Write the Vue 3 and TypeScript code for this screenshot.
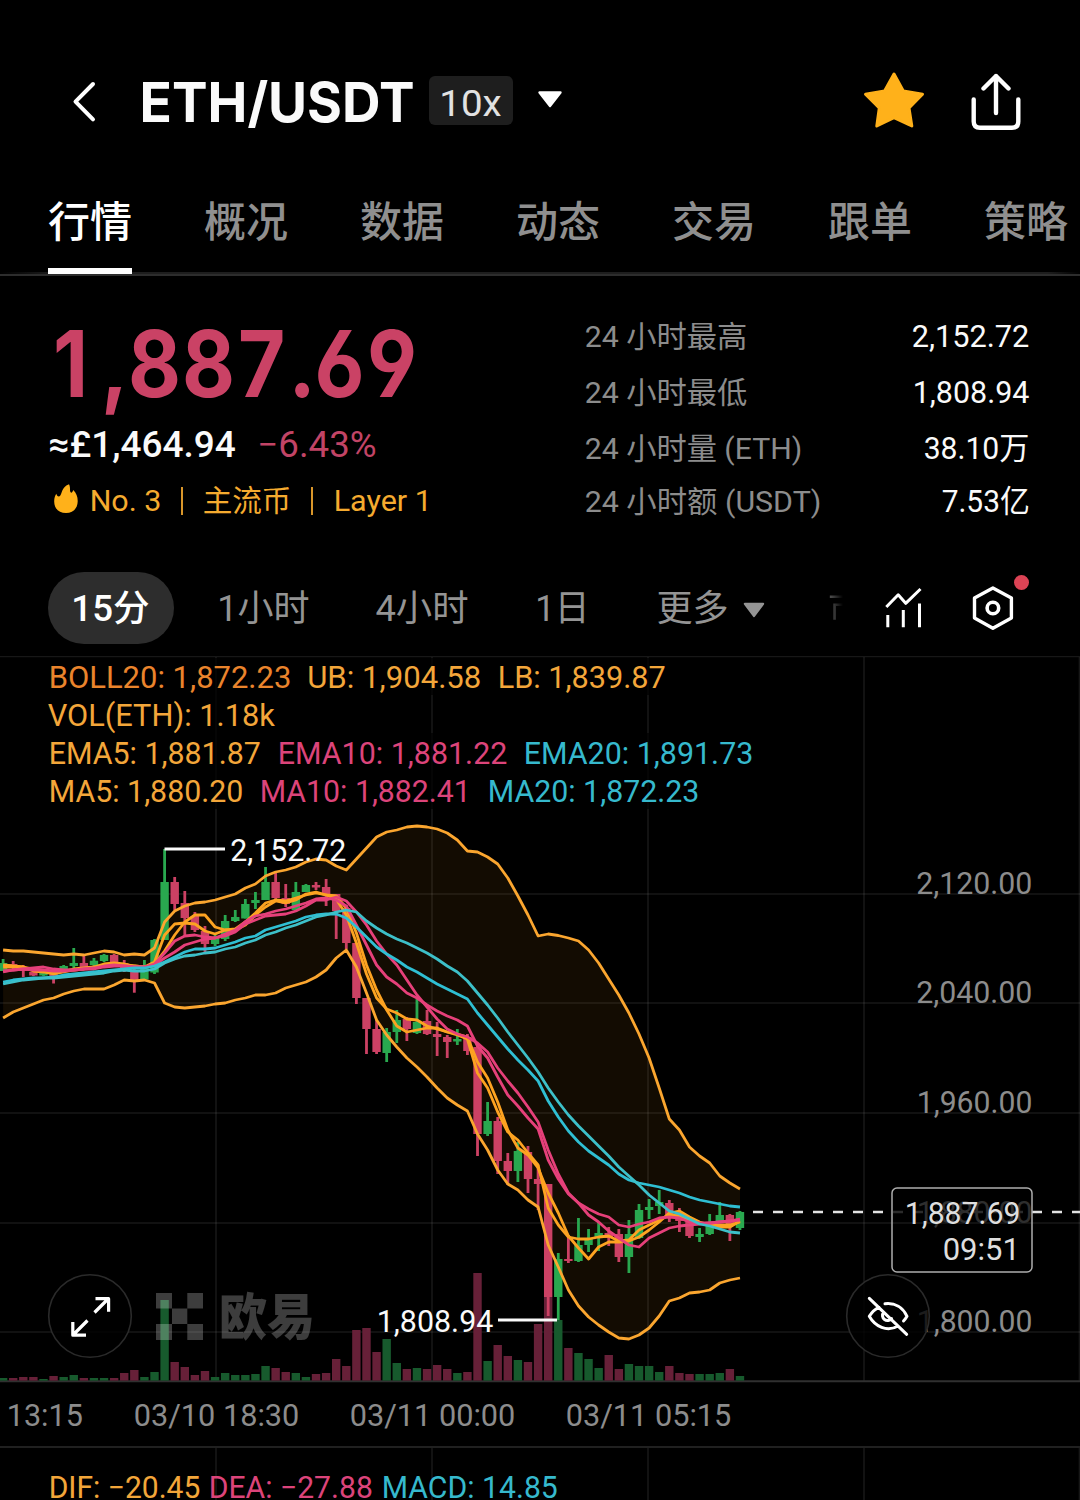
<script setup lang="ts">
import { h, type FunctionalComponent } from 'vue'

interface FitProps {
  text: string
  w: number
  size: number
  weight?: number
}

// Side bearings around the drawn ink; a "1" carries a wider one on its left
function bearings(text: string, size: number) {
  const base = size * 0.045
  return {
    left: base + (text.startsWith('1') ? size * 0.03 : 0),
    right: base + (text.endsWith('1') ? size * 0.05 : 0),
  }
}

// Single line of text condensed or stretched to a fixed width
const Fit: FunctionalComponent<FitProps> = (p) => {
  const b = bearings(p.text, p.size)
  return h('svg', { width: p.w, height: p.size, style: 'display:block;overflow:visible;flex:none' }, [
    h(
      'text',
      {
        x: -b.left,
        y: p.size * 0.86,
        textLength: p.w + b.left + b.right,
        lengthAdjust: 'spacingAndGlyphs',
        fill: 'currentColor',
        'font-size': p.size,
        'font-weight': p.weight ?? 400,
        style: 'white-space:pre',
      },
      p.text,
    ),
  ])
}
Fit.props = ['text', 'w', 'size', 'weight']

// Pen positions of the large price's glyphs, before the horizontal squeeze
const SQUEEZE = 0.89
const priceX = [-3, 45, 72, 126, 182, 232.5, 258.5, 311].map((x) => (x / SQUEEZE).toFixed(1)).join(' ')

const tabs = ['行情', '概况', '数据', '动态', '交易', '跟单', '策略']

const stats = [
  { label: '24 小时最高', lw: 160, value: '2,152.72', vw: 115 },
  { label: '24 小时最低', lw: 160, value: '1,808.94', vw: 113 },
  { label: '24 小时量 (ETH)', lw: 215, value: '38.10万', vw: 103 },
  { label: '24 小时额 (USDT)', lw: 234, value: '7.53亿', vw: 85.5 },
]

const STEP = 10.094
const cx = (i: number) => 3.1 + i * STEP

// [direction, high, body top, body bottom, low, volume top]
type Row = [string, number, number, number, number, number]
const rows: Row[] = [
  ['g', 959, 963, 971, 971, 1378], ['r', 961, 964, 968, 969, 1378], ['r', 965, 967, 971, 977, 1377],
  ['r', 972, 972, 975.5, 976, 1377], ['g', 973, 973, 975.5, 976, 1379], ['r', 973, 973, 977, 983.5, 1376],
  ['g', 965, 966, 970, 972, 1377], ['g', 948, 963, 966, 968, 1375], ['r', 955.7, 963, 967, 968, 1378],
  ['g', 958, 960.7, 965, 966, 1378], ['g', 954, 955, 961, 962, 1378], ['r', 954, 955, 962, 963, 1378],
  ['r', 960, 963, 968, 972, 1373], ['r', 969, 970, 980, 992.7, 1370], ['g', 960, 968, 979.5, 980, 1377],
  ['g', 939, 940, 972.5, 974, 1372], ['g', 849, 882, 940, 940, 1300], ['r', 877, 882, 904, 910, 1362],
  ['r', 891, 903, 918, 936, 1367], ['r', 912, 916, 930, 932, 1375], ['r', 926, 931, 944, 953, 1371],
  ['g', 935, 938, 944, 946, 1377], ['g', 915, 921, 939, 941, 1373], ['g', 910, 917, 921, 922, 1375],
  ['g', 899, 904, 918.5, 918.5, 1375], ['g', 892, 900, 903, 909, 1374], ['g', 867, 882, 900, 900, 1366],
  ['r', 873, 882, 898, 899, 1368], ['r', 884, 898, 904, 907, 1372], ['g', 882, 892, 910, 912, 1373],
  ['g', 884, 885, 892, 892, 1377], ['r', 882, 885, 887.5, 890, 1374], ['r', 879, 887, 894, 906, 1373],
  ['r', 894, 894, 911, 939, 1359], ['r', 905, 908, 943, 949, 1366], ['r', 943, 943, 998, 1004, 1330],
  ['r', 998, 998, 1029, 1054, 1328], ['r', 1020, 1029, 1052, 1054, 1352], ['g', 1028, 1032, 1053, 1062, 1339],
  ['g', 1010, 1020, 1032, 1043, 1363], ['r', 1017, 1019, 1029, 1041, 1369], ['g', 999, 1022, 1033, 1034, 1368],
  ['r', 1010, 1021, 1034, 1035, 1369], ['r', 1022, 1034, 1037, 1056, 1365], ['r', 1035, 1037, 1042, 1058, 1369],
  ['g', 1029, 1039, 1041.5, 1045, 1373], ['r', 1034, 1037, 1051, 1055, 1372], ['r', 1043, 1047, 1134, 1156, 1273],
  ['g', 1102, 1121, 1134, 1136, 1361], ['r', 1117, 1121, 1161, 1174, 1345], ['r', 1153, 1161, 1171, 1185, 1356],
  ['g', 1142, 1151, 1171, 1182, 1360], ['r', 1146, 1152, 1179, 1193, 1362], ['r', 1165, 1179, 1184, 1210, 1324],
  ['r', 1184, 1184, 1297, 1316, 1297], ['g', 1253, 1259, 1297, 1320, 1320], ['r', 1235, 1259, 1261, 1263, 1348],
  ['g', 1218, 1245, 1261, 1262, 1353], ['g', 1229, 1239, 1245, 1252, 1359], ['g', 1222, 1233, 1237, 1251, 1368],
  ['r', 1227, 1233, 1238, 1246, 1355], ['r', 1229, 1234, 1257, 1262, 1369], ['g', 1220, 1234, 1257, 1273, 1364],
  ['g', 1204, 1210, 1238, 1239, 1366], ['g', 1199, 1207, 1210, 1219, 1366], ['g', 1190, 1202, 1206, 1214, 1372],
  ['r', 1200, 1203, 1215, 1222, 1366], ['r', 1208, 1213, 1221, 1232, 1373], ['r', 1220, 1220, 1236, 1238, 1374],
  ['g', 1228, 1234, 1237, 1242, 1374], ['g', 1214, 1222, 1234, 1235, 1374], ['g', 1202, 1215, 1223, 1223, 1373],
  ['r', 1214, 1215, 1226, 1241, 1369], ['g', 1211, 1212, 1228, 1230, 1376],
]
const candles = rows.map(([d, high, top, bottom, low, vol], i) => ({
  x: cx(i), up: d === 'g', high, top, bottom, low, vol,
}))

const upper = [
  950, 951, 951, 952, 953, 954, 955, 954, 955, 953, 951, 952, 955, 954, 955, 948, 922, 911, 906, 903, 902, 900, 897,
  894, 888, 884, 876, 872, 870, 867, 862, 859, 860, 866, 870, 859, 848, 837, 832, 830, 827, 826, 827, 829, 833, 840,
  851, 852, 857, 864, 878, 896, 915, 936, 934, 935.5, 938, 941, 950, 963, 979, 995, 1013, 1034, 1058, 1088, 1119, 1130,
  1147, 1156, 1163, 1176, 1183, 1189,
]
const lower = [
  1018, 1012, 1008, 1004, 1000, 998, 994, 991, 989, 989, 989, 985, 980, 981, 980, 983, 1003, 1007, 1008, 1007, 1006,
  1004, 1003, 1000, 998, 995, 995, 993, 988, 985, 982, 977, 970, 958, 950, 967, 993, 1020, 1035, 1047, 1058, 1067,
  1077, 1088, 1098, 1105, 1111, 1134, 1150, 1170, 1184, 1190, 1200, 1207, 1245, 1267, 1290, 1306, 1317, 1325, 1332,
  1338, 1339, 1335, 1328, 1316, 1301, 1298, 1293, 1292, 1290, 1283, 1280, 1278,
]
const ema20 = [
  982, 980, 979, 978, 978, 977, 975, 974, 973, 972, 971, 970, 969, 968, 968, 966, 962, 957, 952, 949, 949, 948, 945,
  942, 938, 936, 930, 927, 924, 921, 917, 915, 914, 914, 918, 927, 937, 947, 954, 960, 967, 972, 978, 984, 989, 994,
  999, 1013, 1025, 1037, 1049, 1060, 1070, 1081, 1101, 1117, 1131, 1142, 1151, 1158, 1165, 1174, 1180, 1183, 1185,
  1187, 1190, 1193, 1197, 1200, 1202, 1204, 1206, 1207,
]
const ma20 = [
  984, 982, 980, 979, 978, 978, 977, 976, 975, 974, 973, 971, 970, 971, 971, 969, 963, 959, 956, 955, 953, 952, 949,
  947, 943, 940, 935, 932, 928, 925, 921, 917, 915, 912, 910, 912, 921, 928, 934, 939, 943, 948, 953, 959, 966, 972,
  981, 993, 1005, 1018, 1032, 1045, 1058, 1072, 1088, 1102, 1115, 1126, 1136, 1146, 1156, 1167, 1176, 1185, 1195,
  1203, 1211, 1214, 1219, 1224, 1226, 1229, 1232, 1233,
]
const ema10 = [
  972, 970, 969, 970, 970, 971, 971, 970, 969, 968, 966, 965, 966, 967, 967, 964, 953, 941, 936, 935, 937, 938, 934,
  930, 921.5, 916, 914, 911, 909, 906, 903, 899, 898, 900, 906, 925, 945, 965, 977, 984, 993, 998, 1005, 1011, 1016,
  1020, 1026, 1046, 1058, 1077, 1095, 1106, 1118, 1129, 1160, 1179, 1194, 1203, 1209, 1214, 1217, 1225, 1227, 1224,
  1222, 1218, 1217, 1218, 1222, 1223, 1223, 1222, 1221, 1220,
]
const ma10 = [
  971, 970, 969, 968, 967, 969, 970, 970, 969, 969, 967, 966, 966, 967, 967, 965, 958, 952, 945, 942, 939, 938, 936,
  932, 924, 920, 916, 915, 914, 911, 906, 900, 900, 897, 901, 912, 925, 941, 954, 965, 980, 995, 1007, 1019, 1029,
  1034, 1037, 1043, 1052, 1068, 1081, 1093, 1107, 1122, 1150, 1174, 1193, 1203, 1215, 1222, 1231, 1238, 1245, 1247,
  1238, 1233, 1228, 1226, 1225, 1224, 1223, 1222, 1221, 1219,
]
const ema5 = [
  967, 967, 967, 969, 971, 972, 971, 969, 968, 967, 964, 963, 964, 966, 967, 962, 935, 924, 923, 924, 931, 934, 930,
  929, 922, 913, 903, 900, 901, 898, 895, 893, 895, 899, 915, 943, 974, 998, 1009, 1013, 1019, 1020, 1026, 1029, 1032,
  1035, 1039, 1073, 1088, 1112, 1132, 1140, 1153, 1165, 1208, 1225, 1237, 1239, 1239, 1237, 1236, 1241, 1240, 1230,
  1225, 1220, 1215, 1216, 1220, 1223, 1225, 1225, 1225, 1222,
]
const ma5 = [
  965, 966, 967, 971, 972, 974, 972, 970, 969, 967, 965, 964, 965, 966, 967, 964, 951, 935, 922, 915, 915, 927, 930,
  930, 925, 915, 907, 901, 903, 900, 894, 892, 895, 896, 908, 933, 965, 990, 1010, 1026, 1032, 1030, 1028, 1028, 1032,
  1034, 1037, 1062, 1078, 1102, 1130, 1148, 1155, 1168, 1193, 1213, 1236, 1248, 1259, 1247, 1242, 1242, 1241, 1237,
  1230, 1222, 1213, 1211, 1217, 1222, 1225, 1227, 1227, 1221,
]

const pts = (ys: number[]) => ys.map((y, i) => `${cx(i).toFixed(1)},${y}`)
const line = (ys: number[]) => pts(ys).join(' ')
const band = [...pts(upper), ...pts(lower).reverse()].join(' ')

const curves = [
  { ys: upper, color: '#fba62f' },
  { ys: lower, color: '#fba62f' },
  { ys: ma5, color: '#fda321' },
  { ys: ema5, color: '#fda321' },
  { ys: ma10, color: '#e6407a' },
  { ys: ema10, color: '#e6407a' },
  { ys: ema20, color: '#2fbfd3' },
  { ys: ma20, color: '#3dc0c9' },
].map((c) => ({ color: c.color, points: line(c.ys) }))

// [text, left ink edge, right ink edge, baseline, colour]
type Label = [string, number, number, number, string]
const grey = '#8c8c8c'
const gold = '#f3a63a'
const pink = '#dc447a'
const cyan = '#36b9cd'
const labelRows: Label[] = [
  ['BOLL20: 1,872.23', 50, 290, 687.7, '#ea842c'],
  ['UB: 1,904.58', 308.5, 480, 687.7, gold],
  ['LB: 1,839.87', 499, 664.5, 687.7, gold],
  ['VOL(ETH): 1.18k', 49, 273.5, 725.7, gold],
  ['EMA5: 1,881.87', 50, 259.5, 763.7, gold],
  ['EMA10: 1,881.22', 279, 506, 763.7, pink],
  ['EMA20: 1,891.73', 525, 752, 763.7, cyan],
  ['MA5: 1,880.20', 50, 242, 801.7, gold],
  ['MA10: 1,882.41', 261, 468, 801.7, pink],
  ['MA20: 1,872.23', 489, 698, 801.7, cyan],
  ['2,120.00', 917.5, 1031, 893.7, grey],
  ['2,040.00', 917.5, 1031, 1003, grey],
  ['1,960.00', 919, 1031, 1112.7, grey],
  ['1,800.00', 919, 1031, 1331.7, grey],
  ['13:15', 9, 81.5, 1425.5, grey],
  ['03/10 18:30', 135, 298, 1425.5, grey],
  ['03/11 00:00', 351, 514, 1425.5, grey],
  ['03/11 05:15', 567, 730, 1425.5, grey],
  ['DIF: −20.45', 50, 199, 1497.7, gold],
  ['DEA: −27.88', 210, 371.5, 1497.7, pink],
  ['MACD: 14.85', 383, 556.5, 1497.7, cyan],
  ['2,152.72', 231.5, 345, 860.5, '#fafafa'],
  ['1,808.94', 379, 492, 1331.7, '#fafafa'],
]
const fit = ([text, x1, x2, y, color]: Label) => {
  const b = bearings(text, 30)
  return { text, x: x1 - b.left, y, len: x2 - x1 + b.left + b.right, color }
}
const labels = labelRows.map(fit)
const ghost = fit(['1,880.00', 919, 1031, 1222.5, '#2e2e2e'])
const quote = [
  fit(['1,887.69', 907, 1019, 1223.7, '#dedede']),
  fit(['09:51', 944, 1017, 1260, '#dedede']),
]

const gridX = [216, 432, 648, 864, 1079.5]
const gridY = [894, 1003, 1113, 1223, 1332]
</script>

<template>
  <main class="screen">
    <header class="header">
      <svg class="back" width="24" height="42" viewBox="72 81 24 42">
        <path d="M93 84 L75.5 101.7 L93 119.4" fill="none" stroke="#fff" stroke-width="4" stroke-linecap="round" stroke-linejoin="round" />
      </svg>
      <Fit class="title" text="ETH/USDT" :w="270" :size="55" :weight="700" />
      <div class="badge"><Fit text="10x" :w="58" :size="37" /></div>
      <svg class="caret" width="26" height="18" viewBox="537 90 26 18">
        <path d="M539.5 92.5 H560.5 L550 106 Z" fill="#fff" stroke="#fff" stroke-width="2.4" stroke-linejoin="round" />
      </svg>
      <svg class="star" width="62" height="58" viewBox="863 71 62 58">
        <path
          d="M894 74 L903.3 91 L922.5 94.2 L909 107.9 L911.8 126 L894 117.7 L876.8 126 L879.3 107.9 L865.5 94.2 L884.6 91 Z"
          fill="#ffb11a" stroke="#ffb11a" stroke-width="3" stroke-linejoin="round"
        />
      </svg>
      <svg class="share" width="52" height="60" viewBox="970 72 52 60">
        <path
          d="M973.7 99.5 V121.5 Q973.7 127.8 980 127.8 H1012 Q1018.3 127.8 1018.3 121.5 V99.5 M996 113 V76 M983.5 88.5 L996 76 L1008.5 88.5"
          fill="none" stroke="#fff" stroke-width="4.4" stroke-linecap="round" stroke-linejoin="round"
        />
      </svg>
    </header>

    <nav class="tabs">
      <span v-for="(t, i) in tabs" :key="t" class="tab" :class="{ active: i === 0 }">{{ t }}</span>
    </nav>

    <section class="summary">
      <div class="quote">
        <svg class="price" width="361" height="93.5">
          <text :x="priceX" y="80.5" :transform="`scale(${SQUEEZE} 1)`">1,887.69</text>
        </svg>
        <div class="line fiat">
          <Fit text="≈£1,464.94" :w="184" :size="36.5" :weight="500" />
          <Fit class="change" text="−6.43%" :w="116" :size="36.5" />
        </div>
        <div class="line tags">
          <svg class="flame" width="24" height="30" viewBox="54 484 24 30">
            <path
              d="M69 484.3 C70.8 487.5 69.3 490.8 70.8 492.6 C72 493.2 72.8 491.5 73.2 490 C76.3 493 77.8 496.7 77.7 501.5 C77.5 508.8 72.7 513 66 513 C59.2 513 54.3 508.8 54.2 501.7 C54.1 498.3 55 495.8 56.3 493.8 C56.8 495.6 58 496.9 59.7 496.3 C62.3 494.2 60.8 487.5 69 484.3 Z"
              fill="#ffb11a"
            />
          </svg>
          <Fit class="no" text="No. 3" :w="69" :size="30" />
          <i class="bar"></i>
          <Fit class="kind" text="主流币" :w="86" :size="30" />
          <i class="bar"></i>
          <Fit class="layer" text="Layer 1" :w="94" :size="30" />
        </div>
      </div>
      <div class="stats">
        <div v-for="s in stats" :key="s.label" class="stat">
          <Fit class="muted" :text="s.label" :w="s.lw" :size="30" />
          <Fit :text="s.value" :w="s.vw" :size="30.5" />
        </div>
      </div>
    </section>

    <section class="periods">
      <div class="pill"><Fit text="15分" :w="74" :size="36" :weight="500" /></div>
      <Fit class="p1" text="1小时" :w="88" :size="36" />
      <Fit class="p2" text="4小时" :w="90" :size="36" />
      <Fit class="p3" text="1日" :w="50" :size="36" />
      <Fit class="p4" text="更多" :w="69" :size="36" />
      <svg class="more" width="22" height="16" viewBox="0 0 22 16">
        <path d="M1.8 1.8 H20.2 L11 14.2 Z" fill="#949494" stroke="#949494" stroke-width="2" stroke-linejoin="round" />
      </svg>
      <span class="clipped">市</span>
      <svg class="indicator" width="40" height="42" viewBox="884 586 40 42">
        <path
          d="M886.3 607 L898.2 594.8 L905.7 603.3 L920.5 589 M887.8 615 V627.3 M903.3 610 V627.3 M919.5 603.5 V627.3"
          fill="none" stroke="#fff" stroke-width="3" stroke-linejoin="round"
        />
      </svg>
      <span class="settings">
        <svg width="42" height="46" viewBox="972 585 42 46">
          <path d="M992.9 588 L1011.4 598 V618 L992.9 628.2 L974.5 618 V598 Z" fill="none" stroke="#fff" stroke-width="3.4" stroke-linejoin="round" />
          <circle cx="992.9" cy="608" r="5.8" fill="none" stroke="#fff" stroke-width="3.6" />
        </svg>
        <i class="dot"></i>
      </span>
    </section>

    <svg class="chart" width="1080" height="844" viewBox="0 656 1080 844">
      <g stroke="#fff" stroke-opacity="0.09" stroke-width="1.6">
        <line x1="0" x2="1080" y1="656.5" y2="656.5" />
        <line v-for="y in gridY" :key="'h' + y" x1="0" x2="1080" :y1="y" :y2="y" />
        <line v-for="x in gridX" :key="'v' + x" :x1="x" :x2="x" y1="657" y2="1381" />
        <line v-for="x in gridX" :key="'w' + x" :x1="x" :x2="x" y1="1448" y2="1500" />
      </g>
      <g fill="#000" fill-opacity="0.7">
        <rect x="48" y="658" width="618" height="37" />
        <rect x="48" y="695" width="228" height="38" />
        <rect x="48" y="733" width="706" height="38" />
        <rect x="48" y="771" width="652" height="38" />
      </g>
      <line x1="0" x2="1080" y1="1381.3" y2="1381.3" stroke="#303030" stroke-width="2" />
      <line x1="0" x2="1080" y1="1447" y2="1447" stroke="#202020" stroke-width="2" />

      <polygon :points="band" fill="#ff9d1a" fill-opacity="0.075" />

      <rect
        v-for="(c, i) in candles" :key="'vol' + i" :x="c.x - 4.2" :y="c.vol" width="8.4" :height="1380.6 - c.vol"
        :fill="c.up ? '#175a2d' : '#672038'"
      />

      <g v-for="(c, i) in candles" :key="'c' + i" :fill="c.up ? '#29a84f' : '#cc4164'">
        <rect :x="c.x - 1.4" :y="c.high" width="2.8" :height="c.low - c.high" />
        <rect :x="c.x - 4.2" :y="c.top" width="8.4" :height="c.bottom - c.top" />
      </g>

      <polyline
        v-for="(c, i) in curves" :key="'l' + i" :points="c.points" fill="none" :stroke="c.color" stroke-width="2.8"
        stroke-linejoin="round"
      />

      <g fill="#fff" fill-opacity="0.24">
        <path d="M156 1293h16v15.5h-16z M187.3 1293h15.7v15.5h-15.7z M172 1308.5h15.3v15.5h-15.3z M156 1324h16v16h-16z M187.3 1324h15.7v16h-15.7z" />
        <text x="219" y="1335" font-size="50" font-weight="900" textLength="96" lengthAdjust="spacingAndGlyphs">欧易</text>
      </g>

      <path d="M164.5 849 H225 M498 1320 H557" stroke="#fafafa" stroke-width="2.8" />

      <g class="figures">
        <text :x="ghost.x" :y="ghost.y" :textLength="ghost.len" lengthAdjust="spacingAndGlyphs" :fill="ghost.color">{{ ghost.text }}</text>
        <line x1="753" x2="890" y1="1212" y2="1212" stroke="#e2e2e2" stroke-width="2.6" stroke-dasharray="10 10" />
        <line x1="893" x2="1031" y1="1212" y2="1212" stroke="#2b2b2b" stroke-width="2.6" stroke-dasharray="10 10" />
        <line x1="1032" x2="1080" y1="1212" y2="1212" stroke="#e2e2e2" stroke-width="2.6" stroke-dasharray="10 10" />
        <rect x="892" y="1188" width="140" height="84" rx="5" fill="none" stroke="#adadad" stroke-width="1.5" />

        <text
          v-for="l in labels" :key="l.text + l.x" :x="l.x" :y="l.y" :textLength="l.len"
          lengthAdjust="spacingAndGlyphs" :fill="l.color"
        >{{ l.text }}</text>
        <text
          v-for="l in quote" :key="l.text" :x="l.x" :y="l.y" :textLength="l.len"
          lengthAdjust="spacingAndGlyphs" :fill="l.color"
        >{{ l.text }}</text>
      </g>

      <circle cx="90" cy="1316" r="41.3" fill="#000" fill-opacity="0.8" stroke="#2a2a2a" stroke-width="1.6" />
      <path
        d="M94.5 1312.5 L108.5 1298.5 M95.5 1298.7 H108.6 V1311.8 M87.5 1320.5 L73 1335 M72.8 1322 V1335.2 H86"
        fill="none" stroke="#fff" stroke-width="3.2" stroke-linejoin="round"
      />
      <circle cx="888" cy="1316" r="41.3" fill="#000" fill-opacity="0.8" stroke="#2a2a2a" stroke-width="1.6" />
      <path
        d="M885 1303.7 C895 1302.5 903 1307.5 907 1316.3 Q905.5 1319 903.5 1321 M879 1307.3 Q873 1310 869.3 1316.3 C875 1326.5 887 1332.5 898 1326 M869.3 1298.3 L906.7 1334.3 M883.5 1312.5 A5 5 0 1 0 891.5 1318.5"
        fill="none" stroke="#fff" stroke-width="3" stroke-linejoin="round" stroke-linecap="round"
      />
    </svg>
  </main>
</template>

<style>
html,
body {
  background: #000;
}
</style>

<style scoped>
.screen {
  width: 1080px;
  height: 1500px;
  overflow: hidden;
  background: #000;
  color: #fafafa;
  font-family: Roboto, 'Noto Sans CJK SC', sans-serif;
}
.header {
  display: flex;
  align-items: center;
  height: 80px;
  padding: 62px 0 0 72px;
}
.title {
  margin-left: 46px;
  font-family: Inter, Roboto, sans-serif;
}
.badge {
  display: flex;
  align-items: center;
  justify-content: center;
  width: 84px;
  height: 49px;
  box-sizing: border-box;
  margin: 0 0 3px 17px;
  padding-top: 4px;
  border-radius: 6px;
  background: #1e1e1e;
  color: #e2e2e2;
}
.caret {
  margin: 0 0 6px 24px;
}
.star {
  margin-left: auto;
  margin-bottom: 4px;
}
.share {
  margin: 0 58px 0 45px;
}
.tabs {
  display: flex;
  gap: 72px;
  height: 132px;
  padding-left: 48px;
  border-bottom: 2px solid #2d2d2d;
  background: linear-gradient(90deg, transparent, #1e1e1e 5%, #1e1e1e 97%, transparent) bottom / 100% 2px no-repeat;
}
.tab {
  flex: none;
  width: 84px;
  height: 132px;
  box-sizing: border-box;
  padding-top: 47px;
  font: 500 42px/60px 'Noto Sans CJK SC', sans-serif;
  color: #8f8f8f;
}
.active {
  border-bottom: 6px solid #fff;
  color: #fff;
}
.summary {
  display: flex;
  height: 296px;
  padding-left: 48px;
  box-sizing: border-box;
}
.quote {
  width: 537px;
  padding-top: 40px;
}
.price {
  display: block;
  margin-left: 8px;
  overflow: visible;
  fill: #ca4265;
  font: 700 91.5px Inter, Roboto, sans-serif;
  font-feature-settings: 'cv03', 'cv04';
}
.line {
  display: flex;
}
.fiat {
  margin: 16px 0 0 2px;
}
.change {
  margin-left: 25px;
  color: #c24466;
}
.tags {
  margin: 22.5px 0 0 6px;
  color: #f5ab2f;
}
.flame {
  margin-top: -1px;
}
.no {
  margin-left: 13px;
}
.bar {
  width: 2px;
  height: 28px;
  margin: 2px 0 0 21px;
  background: #d9962a;
}
.kind {
  margin-left: 21px;
}
.layer {
  margin-left: 22px;
}
.stats {
  display: flex;
  flex-direction: column;
  width: 443px;
  padding-top: 45px;
}
.stat {
  display: flex;
  justify-content: space-between;
  height: 56px;
}
.stat:nth-child(3) {
  height: 53px;
}
.muted {
  margin-left: 1px;
  color: #8c8c8c;
}
.periods {
  display: flex;
  align-items: center;
  height: 72px;
  margin-bottom: 12px;
  padding-left: 48px;
  color: #949494;
}
.pill {
  display: flex;
  align-items: center;
  justify-content: center;
  width: 126px;
  height: 72px;
  border-radius: 36px;
  background: #2d2d2d;
  color: #fff;
}
.p1 {
  margin-left: 46px;
}
.p2 {
  margin-left: 69px;
}
.p3 {
  margin-left: 71px;
}
.p4 {
  margin-left: 70px;
}
.more {
  margin: 4px 0 0 16px;
}
.clipped {
  width: 15px;
  height: 50px;
  margin: 0 0 6px 63px;
  overflow: hidden;
  font: 36px/50px 'Noto Sans CJK SC', sans-serif;
  color: #4a4a4a;
  -webkit-mask-image: linear-gradient(90deg, #000 20%, transparent);
  mask-image: linear-gradient(90deg, #000 20%, transparent);
}
.indicator {
  margin: 0 0 2px 41px;
}
.settings {
  position: relative;
  display: flex;
  margin-left: 48px;
}
.dot {
  position: absolute;
  top: -10px;
  right: -15px;
  width: 15px;
  height: 15px;
  border-radius: 50%;
  background: #dc4355;
}
.chart {
  display: block;
}
.figures text {
  font: 400 30.5px Roboto, sans-serif;
}
</style>
